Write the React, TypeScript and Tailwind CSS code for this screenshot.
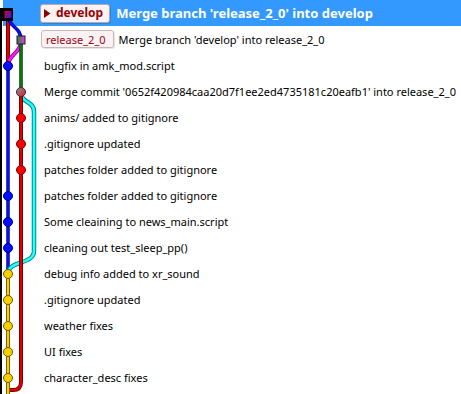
import React from "react";

type Row = { text: string };

const rows: Row[] = [
  { text: "Merge branch 'release_2_0' into develop" },
  { text: "Merge branch 'develop' into release_2_0" },
  { text: "bugfix in amk_mod.script" },
  { text: "Merge commit '0652f420984caa20d7f1ee2ed4735181c20eafb1' into release_2_0" },
  { text: "anims/ added to gitignore" },
  { text: ".gitignore updated" },
  { text: "patches folder added to gitignore" },
  { text: "patches folder added to gitignore" },
  { text: "Some cleaining to news_main.script" },
  { text: "cleaning out test_sleep_pp()" },
  { text: "debug info added to xr_sound" },
  { text: ".gitignore updated" },
  { text: "weather fixes" },
  { text: "UI fixes" },
  { text: "character_desc fixes" },
];

const cy = (i: number) => 14 + 26 * i;

function Line({ d, outer, inner, w = 4, iw = 2 }: { d: string; outer: string; inner: string; w?: number; iw?: number }) {
  return (
    <g fill="none" strokeLinecap="butt">
      <path d={d} stroke={outer} strokeWidth={w} />
      <path d={d} stroke={inner} strokeWidth={iw} />
    </g>
  );
}

function Dot({ x, y, fill, stroke }: { x: number; y: number; fill: string; stroke: string }) {
  return <circle cx={x} cy={y} r={4.5} fill={fill} stroke={stroke} strokeWidth={1} />;
}

function Graph() {
  const L0 = 8;
  const L1 = 21;
  const L2 = 34;
  return (
    <svg className="absolute left-0 top-0" width={44} height={394} viewBox="0 0 44 394">
      <defs>
        <linearGradient id="gDev" x1="0" y1="0" x2="1" y2="1">
          <stop offset="0" stopColor="#d0003a" />
          <stop offset="1" stopColor="#2a22c8" />
        </linearGradient>
        <linearGradient id="gRel" x1="0" y1="0" x2="1" y2="0">
          <stop offset="0" stopColor="#1f8a3a" />
          <stop offset="1" stopColor="#ee33ee" />
        </linearGradient>
        <linearGradient id="gMrg" x1="0" y1="0" x2="1" y2="1">
          <stop offset="0" stopColor="#6aa6a6" />
          <stop offset="0.55" stopColor="#c44a55" />
          <stop offset="1" stopColor="#d0203a" />
        </linearGradient>
      </defs>
      {/* left black border line */}
      <rect x={0} y={8} width={2} height={386} fill="#000" />

      {/* lanes */}
      <Line d={`M${L0},${cy(0)} V${cy(2)}`} outer="#7a0000" inner="#e00000" />
      <Line d={`M${L0},${cy(0)} C${L0},${cy(0) + 14} ${L1},${cy(1) - 14} ${L1},${cy(1)}`} outer="#00008a" inner="#0010ff" w={3.5} />
      <Line d={`M${L1},${cy(1)} C${L1},${cy(1) + 14} ${L0},${cy(2) - 12} ${L0},${cy(2)}`} outer="#a000a0" inner="#ff22ff" />
      <Line d={`M${L1},${cy(1)} V${cy(3)}`} outer="#003a00" inner="#007a00" w={3.5} />
      <Line d={`M${L0},${cy(2)} V${cy(10)}`} outer="#00008a" inner="#0010ff" w={3.5} />
      <Line
        d={`M${L1},${cy(3)} C${L1},${cy(3) + 12} ${L2},${cy(3) + 8} ${L2},${cy(3) + 20} V${cy(9) + 3} C${L2},${cy(9) + 17} ${L0},${cy(10) - 14} ${L0},${cy(10)}`}
        outer="#008a8a"
        inner="#22ffff"
        w={4.5}
        iw={2.5}
      />
      <Line d={`M${L1},${cy(3)} V382 Q${L1},390 13,390 H${L0}`} outer="#7a0000" inner="#e00000" />
      <Line d={`M${L0},${cy(10)} V394`} outer="#7a6000" inner="#f5d000" />

      {/* nodes */}
      <rect x={1} y={8} width={12} height={13} fill="#000" />
      <rect x={4.5} y={11} width={7} height={7} fill="url(#gDev)" />

      <rect x={17} y={cy(1) - 4} width={8} height={8} fill="url(#gRel)" stroke="#202020" strokeWidth={1} />
      <Dot x={L0} y={cy(2)} fill="#0010ff" stroke="#000070" />
      <circle cx={L1} cy={cy(3)} r={4.5} fill="url(#gMrg)" stroke="#303030" strokeWidth={1} />
      {[4, 5, 6].map((i) => (
        <Dot key={i} x={L1} y={cy(i)} fill="#ff0000" stroke="#700000" />
      ))}
      {[7, 8, 9].map((i) => (
        <Dot key={i} x={L0} y={cy(i)} fill="#0010ff" stroke="#000070" />
      ))}
      {[10, 11, 12, 13, 14].map((i) => (
        <Dot key={i} x={L0} y={cy(i)} fill="#f8d000" stroke="#705800" />
      ))}
    </svg>
  );
}

function Triangle() {
  return (
    <svg width={7} height={9} viewBox="0 0 7 9" className="shrink-0">
      <polygon points="0,0 6.5,4.5 0,9" fill="#8a0000" />
    </svg>
  );
}

export default function App() {
  return (
    <div className="relative w-[461px] h-[394px] bg-white overflow-hidden font-['Noto_Sans',sans-serif] text-[11px] text-black leading-none">
      <div className="flex flex-col pl-[3px]">
        {/* row 0 - selected */}
        <div className="h-[26px] flex items-center bg-[#3399ff] pl-[37px]">
          <div className="h-[19px] flex items-center gap-[5px] pl-[3px] pr-[6px] rounded-[3px] border border-[#b8a8a8] bg-[#fbf3f3] shadow-[1px_1px_0_rgba(0,0,0,0.15)]">
            <Triangle />
            <span className="font-bold text-[12px] text-[#990000]">develop</span>
          </div>
          <span className="ml-[6px] font-bold text-[13px] text-white whitespace-nowrap">{rows[0].text}</span>
        </div>
        {/* row 1 */}
        <div className="h-[26px] flex items-center pl-[38px]">
          <div className="h-[18px] flex items-center pl-[4px] pr-[7px] rounded-[3px] border border-[#c8b8b8] bg-[#fbf3f3] shadow-[1px_1px_0_rgba(0,0,0,0.1)]">
            <span className="text-[11px] text-[#a00018]">release_2_0</span>
          </div>
          <span className="ml-[5px] whitespace-nowrap">{rows[1].text}</span>
        </div>
        {rows.slice(2).map((r, i) => (
          <div key={i} className="h-[26px] flex items-center pl-[41px] whitespace-nowrap">
            {r.text}
          </div>
        ))}
      </div>
      <Graph />
    </div>
  );
}
